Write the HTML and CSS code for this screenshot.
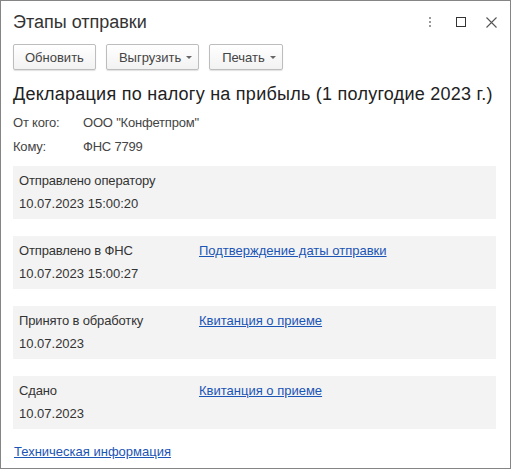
FILE: index.html
```html
<!DOCTYPE html>
<html lang="ru">
<head>
<meta charset="utf-8">
<link rel="stylesheet" href="styles.css">
</head>
<body>
<div class="window">
  <div class="titlebar">
    <div class="title">Этапы отправки</div>
    <div class="controls">
      <svg class="ic kebab" width="4" height="12" viewBox="0 0 4 12"><rect x="1" y="1" width="2" height="2" fill="#9a9a9a"/><rect x="1" y="5" width="2" height="2" fill="#9a9a9a"/><rect x="1" y="9" width="2" height="2" fill="#9a9a9a"/></svg>
      <svg class="ic max" width="10" height="10" viewBox="0 0 10 10"><rect x="0.5" y="0.5" width="9" height="9" fill="none" stroke="#333" stroke-width="1"/></svg>
      <svg class="ic close" width="11" height="11" viewBox="0 0 11 11"><path d="M0.5 0.5 L10.5 10.5 M10.5 0.5 L0.5 10.5" stroke="#555" stroke-width="1.1" fill="none"/></svg>
    </div>
  </div>
  <div class="toolbar">
    <button class="btn">Обновить</button>
    <button class="btn drop">Выгрузить<span class="caret"></span></button>
    <button class="btn drop">Печать<span class="caret"></span></button>
  </div>
  <div class="content">
    <h1 class="doc">Декларация по налогу на прибыль (1 полугодие 2023 г.)</h1>
    <div class="field"><span class="fl">От кого:</span><span>ООО "Конфетпром"</span></div>
    <div class="field"><span class="fl">Кому:</span><span>ФНС 7799</span></div>
    <div class="stages">
      <div class="stage">
        <div class="row"><span class="sl">Отправлено оператору</span></div>
        <div class="date">10.07.2023 15:00:20</div>
      </div>
      <div class="stage">
        <div class="row"><span class="sl">Отправлено в ФНС</span><a class="link" href="#">Подтверждение даты отправки</a></div>
        <div class="date">10.07.2023 15:00:27</div>
      </div>
      <div class="stage">
        <div class="row"><span class="sl">Принято в обработку</span><a class="link" href="#">Квитанция о приеме</a></div>
        <div class="date">10.07.2023</div>
      </div>
      <div class="stage">
        <div class="row"><span class="sl">Сдано</span><a class="link" href="#">Квитанция о приеме</a></div>
        <div class="date">10.07.2023</div>
      </div>
    </div>
    <a class="link tech" href="#">Техническая информация</a>
  </div>
</div>
</body>
</html>
```
FILE: styles.css
```css
* { box-sizing: border-box; }
html, body { margin: 0; padding: 0; background: #fff; }
body { font-family: "Liberation Sans", Arial, sans-serif; color: #333; font-size: 13px; }
.window {
  width: 511px; height: 469px;
  border: 1px solid #858585;
  background: #fff;
  display: flex; flex-direction: column;
}
.titlebar {
  display: flex; align-items: center; justify-content: space-between;
  height: 40px; padding: 2px 13px 0 12px;
}
.title { font-size: 18px; color: #333; }
.controls { display: flex; align-items: center; }
.ic { display: block; }
.kebab { margin-right: 24px; }
.max { margin-right: 20px; }
.toolbar { display: flex; gap: 10px; padding: 3px 12px 0 12px; }
.btn {
  font-family: inherit; font-size: 13px; color: #444;
  height: 26px; padding: 0 11px;
  border: 1px solid #bdbdbd; border-radius: 2px;
  background: linear-gradient(#ffffff, #f2f2f2);
  box-shadow: 0 1px 1px rgba(0,0,0,0.12);
  display: flex; align-items: center;
}
.btn.drop { padding: 0 6px 0 12px; }
.caret {
  display: inline-block; margin-left: 5px; margin-top: 1px;
  width: 0; height: 0;
  border-left: 3px solid transparent; border-right: 3px solid transparent;
  border-top: 3px solid #666;
}
.content { padding: 0 14px 0 12px; }
.doc { font-size: 18px; font-weight: normal; margin: 14px 0 5px 0; color: #222; white-space: nowrap; letter-spacing: 0.25px; }
.field { display: flex; height: 24px; align-items: center; color: #444; letter-spacing: -0.2px; }
.fl { width: 70px; }
.stages { display: flex; flex-direction: column; gap: 17px; margin-top: 8px; }
.stage { background: #f3f3f3; height: 53px; padding: 6px 6px 0 6px; }
.row { display: flex; height: 17px; align-items: center; }
.sl { width: 180px; letter-spacing: -0.15px; }
.date { margin-top: 7px; font-size: 13px; }
.link { color: #1b55b5; text-decoration: underline; }
.tech { display: inline-block; margin-top: 15px; margin-left: 1px; }
```
